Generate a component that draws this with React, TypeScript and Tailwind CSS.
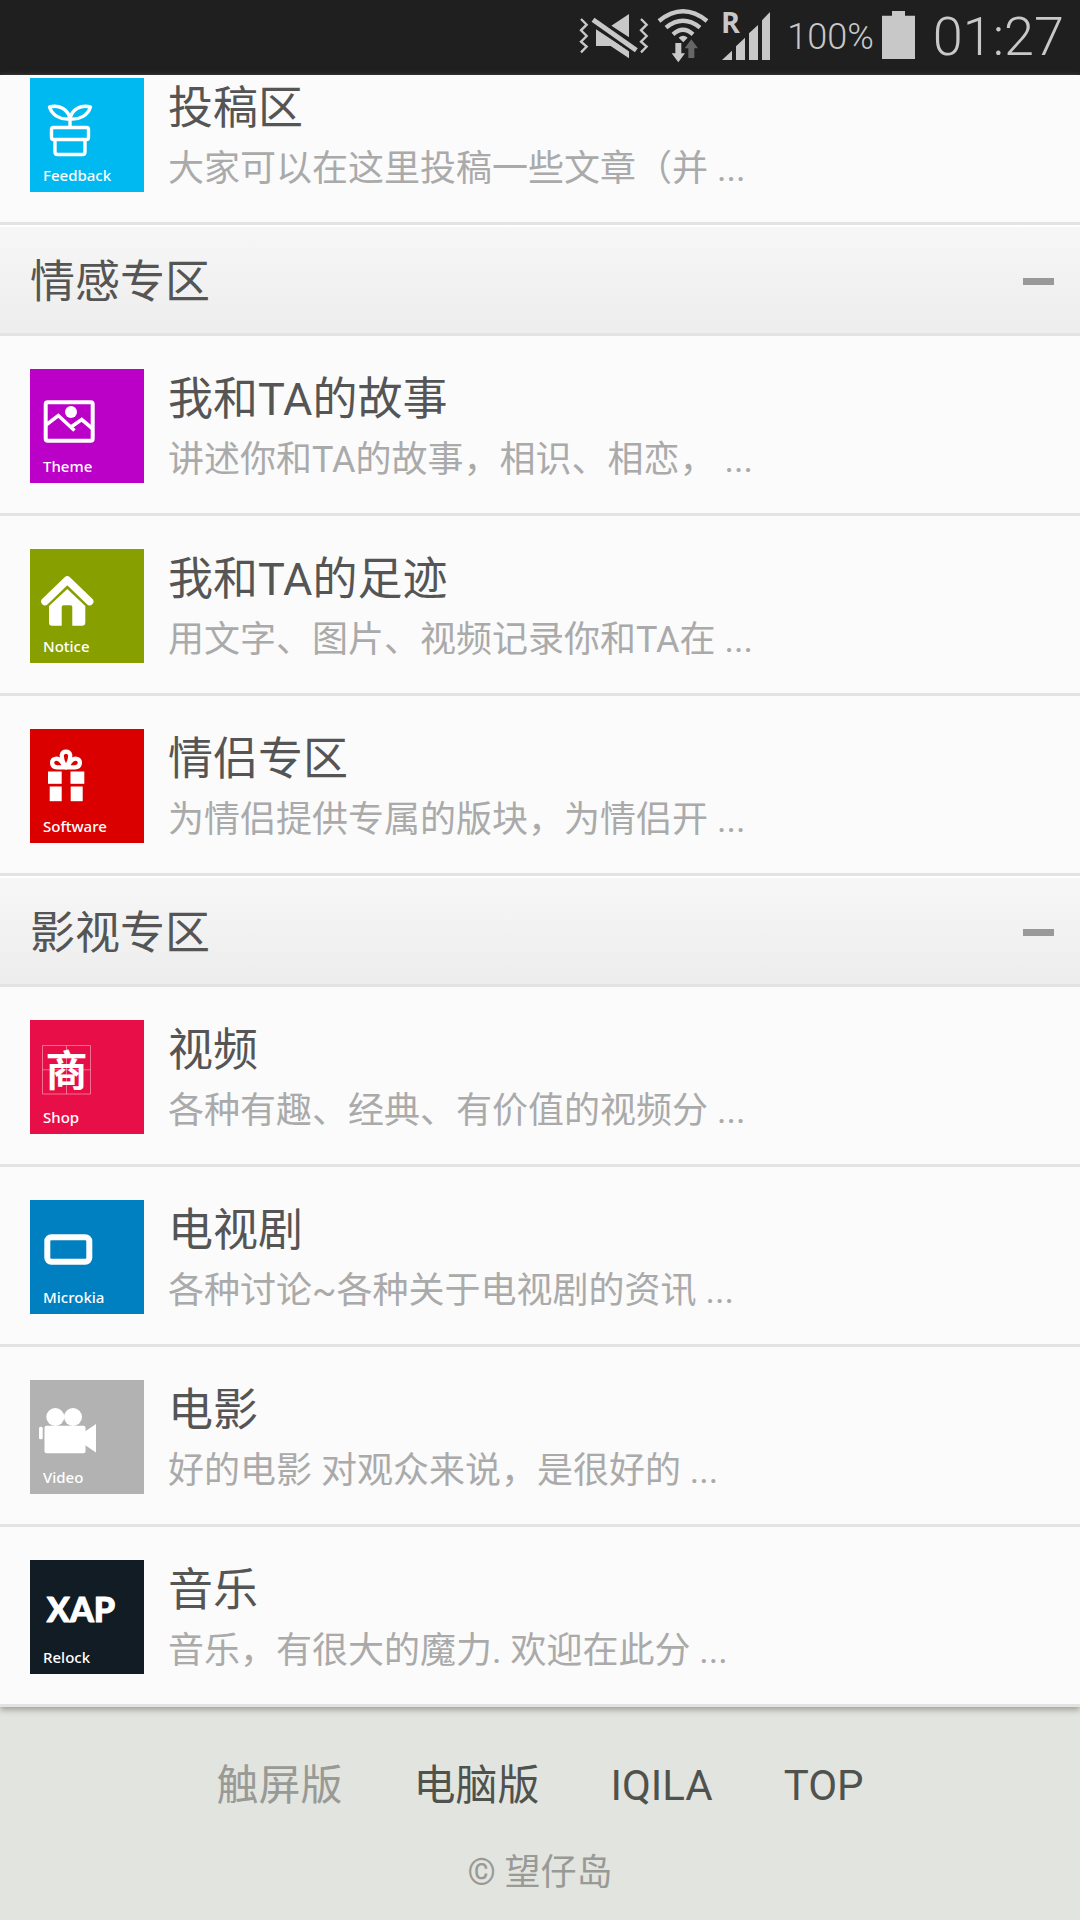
import { useState, type ReactNode } from "react";

type Board = {
  title: string;
  description: string;
  label: string;
  color: string;
  art: ReactNode;
};

type Section = {
  name: string;
  boards: Board[];
};

const feedbackArt = (
  <g fill="none" stroke="currentColor" strokeWidth="3.4" strokeLinejoin="round" strokeLinecap="round">
    <path d="M40 41C30 42 22 37 19.500 29C29 26.500 38 31 40 41Z" />
    <path d="M40 41C50 42 58 37 60.500 29C51 26.500 42 31 40 41Z" />
    <path d="M40 41V49" />
    <rect x="21.500" y="49.500" width="37" height="12" rx="2" />
    <path d="M25 62V74Q25 76.500 27.500 76.500H52.500Q55 76.500 55 74V62" />
  </g>
);

const themeArt = (
  <g>
    <g fill="none" stroke="currentColor" strokeWidth="4">
      <rect x="15.700" y="33.300" width="47" height="38.500" rx="2" />
      <path d="M16 56L28.300 46.500L44.500 61.500M41 58L51.700 50.500L63 60" strokeWidth="3.600" />
    </g>
    <circle cx="41" cy="43" r="6" fill="currentColor" />
  </g>
);

const noticeArt = (
  <g>
    <path
      d="M15 52.500L37.300 31L59.600 52.500"
      fill="none"
      stroke="currentColor"
      strokeWidth="7.600"
      strokeLinecap="round"
      strokeLinejoin="round"
    />
    <path
      d="M37.300 40L55.300 57V73.500Q55.300 76.700 52 76.700H42.300V58Q42.300 56.300 40.500 56.300H33.500Q31.700 56.300 31.700 58V76.700H22Q19 76.700 19 73.500V57Z"
      fill="currentColor"
    />
  </g>
);

const softwareArt = (
  <g>
    <g fill="none" stroke="currentColor" strokeWidth="4.200" strokeLinejoin="round">
      <path d="M36 38.500C32 32 31.500 29 31.800 26A4.300 4.300 0 0 1 40.200 26C40.500 29 40 32 36 38.500Z" />
      <path d="M35 38.300H27C21 38 20.500 31 25.500 29.800C29.500 29 32.500 33 35 38.300Z" />
      <path d="M37 38.300H45C51 38 51.500 31 46.500 29.800C42.500 29 39.500 33 37 38.300Z" />
    </g>
    <g fill="currentColor">
      <rect x="18" y="42.500" width="13.700" height="12.300" />
      <rect x="40.500" y="42.500" width="13.800" height="12.300" />
      <rect x="19.700" y="57.500" width="12" height="14.700" />
      <rect x="40.700" y="57.500" width="12" height="14.700" />
    </g>
  </g>
);

const shopArt = (
  <g>
    <path
      d="M12.500 25.500H60.500V74H12.500ZM12.500 49.800H60.500M36.500 25.500V74"
      fill="none"
      stroke="currentColor"
      strokeOpacity="0.4"
    />
    <text
      x="36.500"
      y="66"
      textAnchor="middle"
      fill="currentColor"
      className="font-['Noto_Sans_CJK_SC',sans-serif] text-[42px] font-bold"
    >
      商
    </text>
  </g>
);

const microkiaArt = (
  <rect x="17.300" y="37.300" width="42" height="24.400" rx="4" fill="none" stroke="currentColor" strokeWidth="6" />
);

const videoArt = (
  <g fill="currentColor">
    <circle cx="25.300" cy="37" r="9" />
    <circle cx="43" cy="37" r="9" />
    <rect x="14.500" y="45.700" width="41" height="27.600" rx="2" />
    <path d="M55 51.500L66 44V72.500L55 65Z" />
    <rect x="9" y="46.700" width="3.700" height="12.600" rx="1.500" />
  </g>
);

const relockArt = (
  <text
    x="51"
    y="62"
    textAnchor="middle"
    fill="currentColor"
    stroke="currentColor"
    strokeWidth="1"
    strokeLinejoin="round"
    className="font-['Lato',sans-serif] text-[34px] font-black"
  >
    XAP
  </text>
);

const feedback: Board = {
  title: "投稿区",
  description: "大家可以在这里投稿一些文章（并 ...",
  label: "Feedback",
  color: "bg-[#00b9f0]",
  art: feedbackArt,
};

const sections: Section[] = [
  {
    name: "情感专区",
    boards: [
      {
        title: "我和TA的故事",
        description: "讲述你和TA的故事，相识、相恋， ...",
        label: "Theme",
        color: "bg-[#bb00c8]",
        art: themeArt,
      },
      {
        title: "我和TA的足迹",
        description: "用文字、图片、视频记录你和TA在 ...",
        label: "Notice",
        color: "bg-[#889f00]",
        art: noticeArt,
      },
      {
        title: "情侣专区",
        description: "为情侣提供专属的版块，为情侣开 ...",
        label: "Software",
        color: "bg-[#db0000]",
        art: softwareArt,
      },
    ],
  },
  {
    name: "影视专区",
    boards: [
      {
        title: "视频",
        description: "各种有趣、经典、有价值的视频分 ...",
        label: "Shop",
        color: "bg-[#e80f49]",
        art: shopArt,
      },
      {
        title: "电视剧",
        description: "各种讨论~各种关于电视剧的资讯 ...",
        label: "Microkia",
        color: "bg-[#0080c0]",
        art: microkiaArt,
      },
      {
        title: "电影",
        description: "好的电影 对观众来说，是很好的 ...",
        label: "Video",
        color: "bg-[#b2b2b2]",
        art: videoArt,
      },
      {
        title: "音乐",
        description: "音乐，有很大的魔力. 欢迎在此分 ...",
        label: "Relock",
        color: "bg-[#111c24]",
        art: relockArt,
      },
    ],
  },
];

function StatusBar() {
  return (
    <header className="flex h-[75px] items-center justify-end bg-[#1f1f1f] pr-4 text-[#c8c8c8]">
      {/* MUTED + VIBRATE */}
      <svg viewBox="51 0 216 225" className="h-[75px] w-[72px]" aria-hidden="true">
        <g fill="none" stroke="currentColor" strokeWidth="7">
          <path d="M60 57L77 74L60 91L77 108L60 125L77 140L60 157" />
          <path d="M240 57L257 74L240 91L257 108L240 125L257 140L240 157" />
        </g>
        <g fill="currentColor">
          <path d="M204 42V112L151 77Z" />
          <path d="M105 88L204 153V175L149 138H105Z" />
        </g>
        <path d="M96 59L226 151" stroke="#1f1f1f" strokeWidth="30" />
        <path d="M96 59L226 151" stroke="currentColor" strokeWidth="15" />
      </svg>

      {/* WIFI */}
      <svg viewBox="288 0 156 225" className="ml-[7px] h-[75px] w-[52px]" aria-hidden="true">
        <g fill="none" stroke="currentColor" strokeWidth="13">
          <path d="M294 63Q366 5 438 63" />
          <path d="M315 83Q366 42 417 83" />
          <path d="M336 103Q366 76 396 103" />
        </g>
        <path d="M353 113Q366 101 380 113L367 127Z" fill="currentColor" />
        <path d="M343 129H361V160H372L352 187L332 160H343Z" fill="currentColor" />
        <path d="M382 174V145H371L391 118L411 145H400V174Z" fill="#666666" />
      </svg>

      {/* SIGNAL */}
      <svg viewBox="480 0 150 225" className="ml-3 h-[75px] w-[50px]" aria-hidden="true">
        <text x="480" y="99" fill="currentColor" className="font-['Open_Sans',sans-serif] text-[86px] font-bold">
          R
        </text>
        <g fill="currentColor">
          <path d="M483 180L513 152V180Z" />
          <path d="M525 180V139L552 113V180Z" />
          <path d="M564 180V100L591 75V180Z" />
          <path d="M603 180V61L627 36V180Z" />
        </g>
      </svg>

      <span className="ml-4 text-[36px] font-light leading-[75px]">100%</span>

      {/* BATTERY */}
      <svg viewBox="966 0 99 225" className="ml-2 h-[75px] w-[33px]" aria-hidden="true">
        <path d="M966 47H996V33H1035V47H1065V177H966Z" fill="currentColor" />
      </svg>

      <span className="ml-[18px] pb-0.5 text-[54px] font-light leading-[72px]">01:27</span>
    </header>
  );
}

function BoardRow({ board, first = false }: { board: Board; first?: boolean }) {
  return (
    <a
      href="#"
      className={`flex items-start gap-6 border-b-[3px] border-[#e3e3e3] px-[30px] pb-[23px] ${
        first ? "pt-[3px]" : "pt-[33px]"
      }`}
    >
      <span className={`flex size-[114px] shrink-0 flex-col text-white ${board.color}`}>
        <svg viewBox="0 0 114 85" className="h-[85px] w-full" aria-hidden="true">
          {board.art}
        </svg>
        <span className="pl-[13px] font-['Noto_Sans',sans-serif] text-[15px] font-medium leading-[24px]">
          {board.label}
        </span>
      </span>
      <span className="flex min-w-0 flex-col pt-px leading-[60px]">
        <span className="truncate text-[45px] text-[#555555]">{board.title}</span>
        <span className="truncate text-[36px] text-[#aaaaaa]">{board.description}</span>
      </span>
    </a>
  );
}

function BoardSection({ section }: { section: Section }) {
  const [open, setOpen] = useState(true);

  return (
    <section>
      <button
        type="button"
        aria-expanded={open}
        onClick={() => setOpen(!open)}
        className="flex h-[111px] w-full items-center justify-between border-b-[3px] border-[#e3e3e3] bg-linear-to-b from-[#f7f7f7] to-[#ededed] pl-[30px] pr-[26px] shadow-[inset_0_2px_0_#ffffff]"
      >
        <span className="pt-2 text-[45px] leading-[60px] text-[#555555]">{section.name}</span>
        <span className="mt-1 h-[7px] w-[31px] bg-[#999999]"></span>
      </button>

      {open && section.boards.map((board) => <BoardRow key={board.title} board={board} />)}
    </section>
  );
}

export default function App() {
  return (
    <div className="flex min-h-screen flex-col bg-[#e2e4df] font-['Roboto','Noto_Sans_CJK_SC',sans-serif]">
      <StatusBar />

      {/* BOARDS */}
      <main className="bg-[#fbfbfb] shadow-[0_3px_6px_#a0a199]">
        <BoardRow board={feedback} first />
        {sections.map((section) => (
          <BoardSection key={section.name} section={section} />
        ))}
      </main>

      {/* FOOTER */}
      <footer className="flex flex-col items-center gap-[30px] pt-[49px] text-[#999a96]">
        <nav className="flex gap-[71px] text-[42px] leading-[60px] text-[#50524e]">
          <a href="#" className="text-[#999a96]">
            触屏版
          </a>
          <a href="#">电脑版</a>
          <a href="#">IQILA</a>
          <a href="#">TOP</a>
        </nav>
        <p className="text-[36px] leading-[54px]">© 望仔岛</p>
      </footer>
    </div>
  );
}
